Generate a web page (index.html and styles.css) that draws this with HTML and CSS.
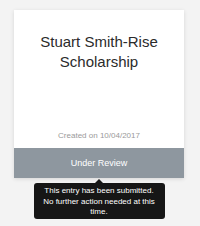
FILE: index.html
```html
<!DOCTYPE html>
<html>
<head>
<meta charset="utf-8">
<link rel="stylesheet" href="styles.css">
</head>
<body>
<div class="wrap">
  <div class="card">
    <div class="card-body">
      <div class="title">Stuart Smith-Rise<br>Scholarship</div>
      <div class="date">Created on 10/04/2017</div>
    </div>
    <div class="status">Under Review</div>
  </div>
  <div class="tooltip">This entry has been submitted. No further action needed at this time.</div>
</div>
</body>
</html>
```

FILE: styles.css
```css
html, body {
  margin: 0;
  padding: 0;
  background: #f3f3f3;
  font-family: "Liberation Sans", Arial, sans-serif;
}
.wrap {
  width: 170px;
  padding: 10px 0 0 14px;
}
.card {
  height: 168px;
  background: #fff;
  box-shadow: 0 1px 4px rgba(0, 0, 0, 0.12);
  display: flex;
  flex-direction: column;
}
.card-body {
  flex: 1;
  display: flex;
  flex-direction: column;
  justify-content: space-between;
  align-items: center;
  padding: 22px 0 7px;
}
.title {
  font-size: 15px;
  line-height: 20px;
  color: #2b2b2b;
  text-align: center;
}
.date {
  font-size: 8px;
  line-height: 10px;
  color: #9a9a9a;
}
.status {
  height: 30px;
  line-height: 30px;
  background: #8e979f;
  color: #fff;
  font-size: 9px;
  text-align: center;
}
.tooltip {
  position: relative;
  width: 131px;
  box-sizing: border-box;
  margin: 5px auto 0;
  padding: 3px 6px 1px;
  background: #161616;
  color: #fff;
  border-radius: 3px;
  font-size: 8px;
  line-height: 10.5px;
  text-align: center;
}
.tooltip::before {
  content: "";
  position: absolute;
  top: -4px;
  left: 50%;
  margin-left: -4px;
  border-left: 4px solid transparent;
  border-right: 4px solid transparent;
  border-bottom: 4px solid #161616;
}
```
